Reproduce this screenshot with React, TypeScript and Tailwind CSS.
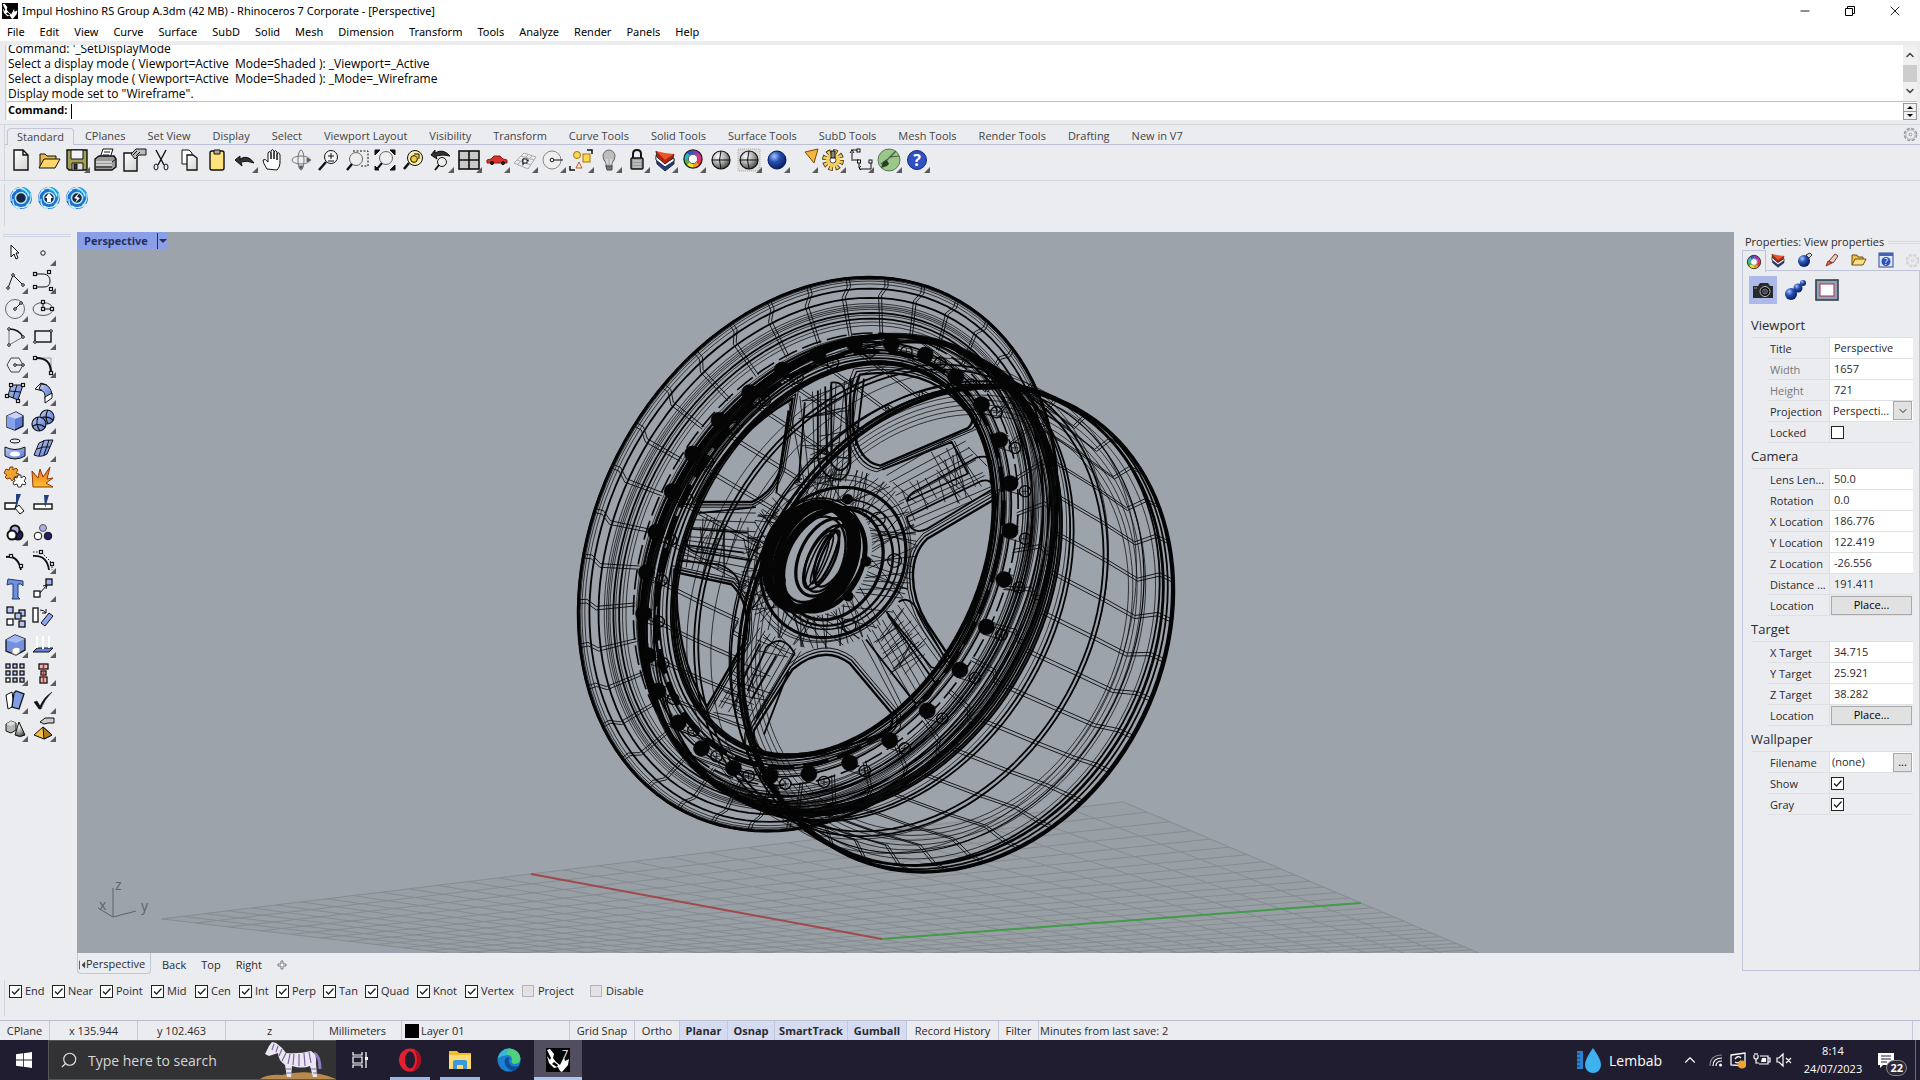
import type { ReactNode } from "react";
import { ChevronDown, ChevronUp, Minus, Search, X } from "lucide-react";

/* ---------- data ---------- */

const menus = ["File", "Edit", "View", "Curve", "Surface", "SubD", "Solid", "Mesh", "Dimension", "Transform", "Tools", "Analyze", "Render", "Panels", "Help"];

const toolTabs = ["CPlanes", "Set View", "Display", "Select", "Viewport Layout", "Visibility", "Transform", "Curve Tools", "Solid Tools", "Surface Tools", "SubD Tools", "Mesh Tools", "Render Tools", "Drafting", "New in V7"];

const osnaps = [
  { label: "End", width: "w-[43px]" },
  { label: "Near", width: "w-[48px]" },
  { label: "Point", width: "w-[51px]" },
  { label: "Mid", width: "w-[44px]" },
  { label: "Cen", width: "w-[44px]" },
  { label: "Int", width: "w-[37px]" },
  { label: "Perp", width: "w-[47px]" },
  { label: "Tan", width: "w-[42px]" },
  { label: "Quad", width: "w-[52px]" },
  { label: "Knot", width: "w-[48px]" },
  { label: "Vertex", width: "w-[57px]" },
];

const toggles = [
  { label: "Grid Snap", width: "w-[65px]", on: false },
  { label: "Ortho", width: "w-[45px]", on: false },
  { label: "Planar", width: "w-[48px]", on: true },
  { label: "Osnap", width: "w-[47px]", on: true },
  { label: "SmartTrack", width: "w-[73px]", on: true },
  { label: "Gumball", width: "w-[59px]", on: true },
  { label: "Record History", width: "w-[92px]", on: false },
  { label: "Filter", width: "w-[40px]", on: false },
];

/* ---------- wheel geometry ---------- */

type Ring = [cx: number, cy: number, w: number, h: number, k: number];

const FRONT: Ring = [632, 744, 588, 701, 125];
const LIP: Ring = [652, 757, 468, 568, 115];
const FACE: Ring = [654, 757, 452, 550, 115];
const DISC: Ring = [672, 757, 388, 493, 110];
const MID: Ring = [711, 795, 508, 605, 115];
const BACK: Ring = [976, 935, 528, 613, 86];

function mix(a: Ring, b: Ring, t: number): Ring {
  return a.map((v, i) => v + (b[i] - v) * t) as Ring;
}

function grow(r: Ring, f: number): Ring {
  return [r[0], r[1], r[2] * f, r[3] * f, r[4] * f];
}

function at([cx, cy, w, h, k]: Ring, a: number): [number, number] {
  return [cx + k * Math.sin(a) + Math.sqrt(w * w - k * k) * Math.cos(a), cy - h * Math.sin(a)];
}

function line(points: [number, number][]) {
  return "M" + points.map((p) => p[0].toFixed(1) + " " + p[1].toFixed(1)).join("L");
}

function loop(r: Ring) {
  return line(Array.from({ length: 120 }, (_, i) => at(r, (i / 120) * Math.PI * 2))) + "Z";
}

const fineRings = [
  ...[0.04, 0.07, 0.12, 0.46, 0.5, 0.53, 0.56, 0.66, 0.78, 0.84].map((s) => mix(FRONT, LIP, s)),
  ...[0.15, 0.3, 0.45, 0.6, 0.7, 0.8, 0.9].map((s) => mix(LIP, MID, s)),
  ...[0.1, 0.25, 0.4, 0.6].map((s) => mix(FACE, DISC, s)),
  ...[0.08, 0.44, 0.68].map((s) => mix(MID, BACK, s)),
  ...[0.86, 0.88, 0.9, 0.92, 0.94].map((f) => grow(mix(MID, BACK, 0.87), f)),
  grow(mix(MID, BACK, 0.9), 0.97),
].map(loop);

const boldRings = [
  ...[0, 0.018, 0.2, 0.36, 0.62, 0.72].map((s) => mix(FRONT, LIP, s)),
  ...[0.4, 0.65, 0.76, 0.86, 0.95, 1].map((s) => mix(LIP, MID, s)),
  ...[0, 0.35, 0.5, 0.72, 0.85, 1].map((s) => mix(FACE, DISC, s)),
  ...[0.02, 0.04, 0.11, 0.14].map((s) => mix(MID, BACK, s)),
  ...[0.96, 0.98].map((f) => grow(mix(MID, BACK, 0.47), f)),
  ...[0.88, 0.95, 0.985, 1].map((s) => mix(MID, BACK, s)),
].map(loop);

// each meridian is drawn twice, a hair apart, as the surface seams are
const meridians = Array.from({ length: 38 }, (_, i) => (i / 38) * Math.PI * 2).flatMap((a) =>
  [0, 0.014].flatMap((d) => [
    line([FRONT, mix(FRONT, LIP, 0.15), mix(FRONT, LIP, 0.32), mix(FRONT, LIP, 0.62), LIP].map((r, n) => at(r, a + d + (n > 1 ? 0.03 : 0)))),
    line([MID, grow(mix(MID, BACK, 0.47), 0.97), grow(mix(MID, BACK, 0.8), 0.94), mix(MID, BACK, 0.88), BACK].map((r, n) => at(r, a + d + (n > 2 ? 0.03 : 0)))),
  ]),
);

const bolts = [
  [1103, 685], [1103, 565], [1078, 455], [1033, 365], [970, 295], [895, 240], [812, 212], [722, 212], [632, 240],
  [545, 278], [465, 335], [390, 405], [325, 490], [275, 585], [235, 688], [212, 790], [205, 895], [216, 1000],
  [240, 1090], [290, 1170], [347, 1235], [425, 1285], [515, 1305], [610, 1300], [710, 1272], [808, 1215],
  [900, 1140], [980, 1037], [1045, 928], [1088, 808],
];

const openings = [
  { d: "M735 290Q715 330 718 420Q730 510 785 520L1000 425Q1025 400 990 375Q900 265 735 290Z", c: [850, 400] },
  { d: "M1065 605L900 705Q865 740 865 800Q865 860 900 920L955 1005Q1055 850 1065 605Z", c: [980, 800] },
  { d: "M475 1190L570 1035Q645 970 710 1020L812 1145Q822 1185 790 1197Q640 1260 510 1250Q470 1230 475 1190Z", c: [645, 1130] },
  { d: "M285 790L420 820Q470 870 455 960L360 1130Q280 1000 285 790Z", c: [370, 920] },
  { d: "M335 612L470 612Q520 590 540 530L570 350Q420 440 335 612Z", c: [460, 510] },
];

const pockets = [
  "M632 330L632 500Q640 555 690 555Q715 540 712 500L712 300",
  "M665 310Q700 305 700 350L710 510Q690 550 665 515Z",
  "M745 300L725 470M650 320L655 520M600 360L585 560M560 380L530 590",
  "M850 610Q855 590 880 580L1020 500Q1060 490 1058 520L1055 560",
  "M850 650L1030 560Q1060 550 1060 580L900 680Q860 700 850 650Z",
  "M790 530L960 460L1000 540L850 610",
  "M750 960L870 1120Q910 1120 920 1070L805 900",
  "M830 865Q850 850 870 875L945 1010Q940 1040 910 1030L800 890",
  "M460 1090L505 980Q545 940 575 995L480 1160",
  "M440 1080L490 970M530 1000L470 1110M560 1040L500 1200",
  "M320 680L460 690M300 720L450 740M290 760L390 770Q440 790 440 830",
  "M310 690Q300 740 350 740L470 760M340 640L480 625",
];

// spoke side rails: hub end then rim end
const spokes = [
  [[600, 570], [700, 560], [570, 350], [740, 290]],
  [[800, 545], [860, 680], [985, 440], [1062, 585]],
  [[840, 860], [740, 960], [945, 1015], [830, 1140]],
  [[590, 990], [490, 930], [480, 1180], [370, 1120]],
  [[480, 830], [480, 640], [290, 780], [330, 640]],
];

function rnd(n: number) {
  const x = Math.sin(n * 127.1) * 43758.5453;
  return x - Math.floor(x);
}

const spokeMesh = spokes.flatMap(([a, b, c, d], s) =>
  Array.from({ length: 26 }, (_, i) => {
    const pick = (u: number, v: number): [number, number] => [
      (a[0] * (1 - u) + b[0] * u) * (1 - v) + (c[0] * (1 - u) + d[0] * u) * v,
      (a[1] * (1 - u) + b[1] * u) * (1 - v) + (c[1] * (1 - u) + d[1] * u) * v,
    ];
    const n = s * 50 + i;
    if (i < 9) return line([pick(i / 8, 0), pick(i / 8 + (rnd(n) - 0.5) * 0.12, 1)]);
    const v = rnd(n);
    return line([pick(rnd(n + 7) * 0.4, v), pick(0.6 + rnd(n + 3) * 0.4, v + (rnd(n + 11) - 0.5) * 0.3)]);
  }),
);

const hubRings: { r: Ring; w: number }[] = [
  { r: [612, 750, 104, 132, 26], w: 13 },
  { r: [630, 752, 100, 132, 26], w: 8 },
  { r: [622, 757, 78, 108, 26], w: 3 },
  { r: [644, 760, 104, 128, 26], w: 6 },
  { r: [648, 752, 70, 98, 28], w: 4 },
  { r: [655, 755, 56, 84, 28], w: 3 },
  { r: [640, 758, 44, 74, 28], w: 3 },
  { r: [655, 750, 30, 66, 26], w: 3 },
  { r: [630, 762, 30, 66, 26], w: 2 },
  { r: [642, 757, 28, 62, 25], w: 2 },
  { r: [668, 748, 46, 78, 28], w: 3 },
  { r: [620, 742, 126, 140, 20], w: 2 },
  { r: [670, 770, 122, 140, 26], w: 4 },
  { r: [676, 775, 140, 150, 26], w: 3 },
  { r: [676, 770, 156, 164, 26], w: 2 },
  { r: [670, 765, 178, 190, 26], w: 4 },
  { r: [666, 760, 190, 204, 26], w: 1 },
  { r: [660, 755, 200, 212, 26], w: 1 },
];

const hubMesh = Array.from({ length: 110 }, (_, i) => {
  const a = (i / 110) * Math.PI * 2;
  const from: Ring = [645, 755, 120, 145, 26];
  const to: Ring = [660, 755, 215, 228, 26];
  return line([at(from, a), at(to, a + (rnd(i) - 0.5) * 0.9)]);
});

/* ---------- construction plane ---------- */

// maps plane units (-1..1) to the canvas
function plane(u: number, v: number): [number, number] {
  const w = 1 - 0.2597 * u - 0.1713 * v;
  return [(-488.9 * u + 245.9 * v + 882) / w, (-292 * u - 190.7 * v + 939) / w];
}

const gridLines = Array.from({ length: 29 }, (_, i) => i / 14 - 1).flatMap((t) => [
  line([plane(t, -1), plane(t, 1)]),
  line([plane(-1, t), plane(1, t)]),
]);

function Scene() {
  return (
    <svg viewBox="77 232 1657 721" preserveAspectRatio="xMidYMid slice" className="absolute inset-0 h-full w-full" aria-label="Wheel wireframe">
      <path d={line([plane(-1, -1), plane(-1, 1), plane(1, 1), plane(1, -1)]) + "Z"} fill="#969ca1" fillOpacity="0.55" />
      <path d={gridLines.join("")} fill="none" stroke="#868c92" strokeWidth="1" />
      <path d={line([plane(1, 0), plane(0, 0)])} stroke="#a04a4c" strokeWidth="2" />
      <path d={line([plane(0, 1), plane(0, 0)])} stroke="#459a4b" strokeWidth="2" />

      <g fill="none" stroke="#5d636a" strokeWidth="1">
        <path d="M113 888V917L136 911M113 917L98 908" />
      </g>
      <g fill="#5d636a" fontSize="14">
        <text x="115" y="890">z</text>
        <text x="99" y="910">x</text>
        <text x="141" y="911">y</text>
      </g>

      <g transform="translate(560 260) scale(.408 .3954)" fill="none" stroke="#050505" strokeLinejoin="round">
        <path d={fineRings.join("")} strokeWidth="1.8" />
        <path d={boldRings.join("")} strokeWidth="4.5" />
        <path d={meridians.join("")} strokeWidth="2.2" />
        <path d={loop(FRONT)} strokeWidth="6" />
        <path d={loop(BACK)} strokeWidth="8" />
        <path d={loop(mix(LIP, MID, 0.9))} strokeWidth="12" strokeOpacity="0.85" />
        <path d={loop(mix(MID, BACK, 0.03))} strokeWidth="9" strokeOpacity="0.7" />
        <path d={loop(mix(FACE, DISC, 0.42))} strokeWidth="12" strokeDasharray="64 22" />
        <path d={loop(mix(FRONT, LIP, 0.97))} strokeWidth="4" strokeDasharray="50 14" />
        <path d={loop(mix(FACE, DISC, 0.92))} strokeWidth="8" />
        {/* barrel seen through the openings */}
        <path d={loop(grow(mix(MID, BACK, 0.93), 0.99))} strokeWidth="7" />
        <path d={loop(grow(mix(MID, BACK, 0.8), 0.97))} strokeWidth="3" />
        <path d={spokeMesh.join("")} strokeWidth="2" />
        <path d={hubMesh.join("")} strokeWidth="2" />
        <path d={pockets.join("")} strokeWidth="4.5" />
        {openings.map(({ d, c }) => (
          <g key={d}>
            <path d={d} strokeWidth="6" />
            <path d={d} strokeWidth="3" transform={`translate(${c[0]} ${c[1]}) scale(1.07) translate(${-c[0]} ${-c[1]})`} />
            <path d={d} strokeWidth="2" transform={`translate(${c[0]} ${c[1]}) scale(1.13) translate(${-c[0]} ${-c[1]})`} />
          </g>
        ))}
        {hubRings.map(({ r, w }) => (
          <path key={loop(r)} d={loop(r)} strokeWidth={w * 2} />
        ))}
        {[[705, 605], [750, 762], [706, 850], [540, 810], [630, 620], [600, 880]].map(([x, y]) => (
          <circle key={x} cx={x} cy={y} r="13" fill="#050505" />
        ))}
        {[[780, 655], [708, 925], [820, 760]].map(([x, y]) => (
          <circle key={x} cx={x} cy={y} r="17" strokeWidth="3" />
        ))}
        {bolts.map(([x, y]) => (
          <g key={`${x}-${y}`}>
            <circle cx={x} cy={y} r="20" fill="#050505" />
            <circle cx={x + 37} cy={y + 20} r="14" strokeWidth="3.5" />
            <path d={`M${x + 28} ${y + 20}h18m-9-9v18M${x - 8} ${y - 18}l30 8M${x - 8} ${y + 18}l38 12`} strokeWidth="2" />
          </g>
        ))}
      </g>
    </svg>
  );
}

/* ---------- icons ---------- */

function Tool({ children, label, flyout }: { children: ReactNode; label: string; flyout?: boolean }) {
  return (
    <button type="button" aria-label={label} className="h-7 w-7 shrink-0">
      <svg viewBox="0 0 28 28" className="h-7 w-7" fill="none" stroke="#111" strokeWidth="1">
        {children}
        {flyout && <path d="M21 27L27 21V27Z" fill="#5b5b5b" stroke="none" />}
      </svg>
    </button>
  );
}

function Gradients() {
  return (
    <svg className="absolute h-0 w-0" aria-hidden="true">
      <defs>
        <radialGradient id="gray" cx=".35" cy=".3" r=".8">
          <stop offset="0" stopColor="#fff" />
          <stop offset=".5" stopColor="#a9a9a9" />
          <stop offset="1" stopColor="#333" />
        </radialGradient>
        <radialGradient id="blue" cx=".35" cy=".3" r=".8">
          <stop offset="0" stopColor="#a9c4ff" />
          <stop offset=".4" stopColor="#2450b4" />
          <stop offset="1" stopColor="#04124a" />
        </radialGradient>
        <linearGradient id="steel" x1="0" y1="0" x2="1" y2="1">
          <stop offset="0" stopColor="#bccbf8" />
          <stop offset="1" stopColor="#5476cf" />
        </linearGradient>
        <linearGradient id="paper" x1="0" y1="0" x2="1" y2="1">
          <stop offset="0" stopColor="#fff" />
          <stop offset="1" stopColor="#d2d2d2" />
        </linearGradient>
        <linearGradient id="fire" x1="0" y1="0" x2="0" y2="1">
          <stop offset="0" stopColor="#f06a1c" />
          <stop offset="1" stopColor="#fcc02e" />
        </linearGradient>
      </defs>
    </svg>
  );
}

const wheelColors = ["#e43b2f", "#f29a22", "#f2e526", "#48b649", "#28b7c9", "#3553c8", "#8a3cb8", "#dd2f8c"];

function ColorWheel({ cx, cy, r }: { cx: number; cy: number; r: number }) {
  return (
    <g strokeWidth={r * 0.6}>
      {wheelColors.map((c, i) => (
        <circle key={c} cx={cx} cy={cy} r={r} stroke={c} pathLength={8} strokeDasharray="1.05 6.95" strokeDashoffset={-i} />
      ))}
      <circle cx={cx} cy={cy} r={r * 1.3} stroke="#222" strokeWidth="1.3" />
      <circle cx={cx} cy={cy} r={r * 0.66} fill="#fff" stroke="#333" strokeWidth=".8" />
    </g>
  );
}

const layersShape = (
  <g strokeWidth=".8">
    <path d="M5 11L14 18L23 13V18L14 25L6 18Z" fill="#1f3f8f" />
    <path d="M5 9L14 17L23 12V15L14 21L5 14Z" fill="#fff" />
    <path d="M5 5L14 14L23 8L22 12L14 18L6 11Z" fill="#b52410" />
    <path d="M5 5L14 7L23 8L14 14Z" fill="#f0522a" stroke="none" />
  </g>
);

const standardTools: { label: string; flyout?: boolean; art: ReactNode }[] = [
  { label: "New", art: <path d="M7 4H16L21 9V24H7ZM16 4V9H21" fill="url(#paper)" strokeWidth="1.4" /> },
  { label: "Open", art: <><path d="M5 21V8H10L12 10H21V13" fill="#e9b840" /><path d="M4 22L9 13H25L20 22Z" fill="#ffd76a" /></> },
  { label: "Save", flyout: true, art: <><path d="M4 4H24V24H6L4 22Z" fill="#a3a056" strokeWidth="1.4" /><path d="M8 4H20V13H8Z" fill="#f4f4f4" /><path d="M9 17H20V24H9Z" fill="#ddd" /><path d="M11 18H14V23H11Z" fill="#333" /></> },
  { label: "Print", art: <><path d="M9 12L12 3H22L19 12Z" fill="#fff" /><path d="M4 13L8 10H23L25 13V21L21 24H4Z" fill="#999" strokeWidth="1.4" /><path d="M5 16H21M5 19H21" stroke="#fff" /><path d="M13 6H19M12 9H18M5 21H21M21 16L25 13" /></> },
  { label: "Document properties", art: <><path d="M5 7H18V25H5Z" fill="url(#paper)" strokeWidth="1.4" /><path d="M12 8L17 3H27V9H20L16 13Z" fill="#bbb" /><path d="M14 9L18 5M17 10L21 6" /></> },
  { label: "Cut", art: <><path d="M9 4L17 19M19 4L11 19" strokeWidth="1.4" /><ellipse cx="9" cy="21" rx="2" ry="3" /><ellipse cx="19" cy="21" rx="2" ry="3" /></> },
  { label: "Copy", art: <><path d="M7 4H14L17 7V18H7Z" fill="#fff" /><path d="M12 9H18L22 12V24H12Z" fill="url(#paper)" strokeWidth="1.3" /></> },
  { label: "Paste", art: <><rect x="7" y="5" width="14" height="19" rx="2" fill="#ffe37c" strokeWidth="1.4" /><path d="M11 4H17V8H11Z" fill="#aaa" /></> },
  { label: "Undo", flyout: true, art: <path d="M4 14L9 10V13Q17 8 23 17Q16 14 10 16L11 20Z" fill="#333" /> },
  { label: "Pan", art: <path d="M8 23Q4 17 4 14Q6 12 9 16V7Q10 4 12 7V13V5Q13 2 15 5V13V6Q16 3 18 6V14V8Q20 5 21 9V17Q21 21 18 24Z" fill="#fff" /> },
  { label: "Rotate view", art: <g stroke="#777"><ellipse cx="14" cy="14" rx="9" ry="4" /><ellipse cx="14" cy="14" rx="3" ry="10" /><path d="M24 14L20 12V16ZM14 24L12 20H16Z" fill="#444" /></g> },
  { label: "Zoom dynamic", art: <><circle cx="16" cy="11" r="6.5" fill="#f5f5f5" /><path d="M11 16L4 24" strokeWidth="2.4" /><path d="M13 10H19M16 7V13M13 15H19" /></> },
  { label: "Zoom window", art: <><path d="M10 5H25V20H18" strokeDasharray="2 1.5" /><circle cx="13" cy="13" r="6.5" fill="#eee" stroke="#666" /><path d="M9 18L4 24" strokeWidth="2.4" /></> },
  { label: "Zoom extents", art: <><path d="M4 4H9L4 9ZM24 4V9L19 4ZM24 24H19L24 19ZM4 24V20L8 24Z" fill="#111" /><circle cx="15" cy="12" r="6.5" fill="#eee" stroke="#666" /><path d="M11 17L6 23" strokeWidth="2" /></> },
  { label: "Zoom selected", art: <><circle cx="16" cy="12" r="7.5" fill="#f6efb0" /><path d="M10 17L5 23" strokeWidth="2.6" /><circle cx="15" cy="13" r="3.4" fill="#f2cc3a" /><path d="M15 8H20V13" fill="#f2cc3a" /></> },
  { label: "Undo view", flyout: true, art: <><path d="M4 9L8 4V7Q16 2 23 10Q16 8 9 10L10 13Z" fill="#333" /><circle cx="15" cy="16" r="4.5" fill="#eee" /><path d="M12 19L8 24" strokeWidth="2" /></> },
  { label: "Viewports", flyout: true, art: <><rect x="4" y="5" width="20" height="18" fill="#c9c9c9" strokeWidth="1.6" /><path d="M14 5V23M4 14H24" strokeWidth="1.6" /></> },
  { label: "Set view", flyout: true, art: <><path d="M4 14L8 13L11 10H17L20 13L24 14V17H4Z" fill="#d6342b" stroke="#8c1812" /><circle cx="9" cy="17" r="1.600" fill="#222" /><circle cx="20" cy="17" r="1.600" fill="#222" /></> },
  { label: "Set CPlane", flyout: true, art: <g stroke="#aaa"><path d="M3 17L13 7L25 11L17 23ZM7 18L17 9M11 20L21 10M6 14L20 19M10 10L23 14" /><path d="M12 19V13L18 15" stroke="#111" /><rect x="12" y="13" width="4" height="4" fill="#fff" stroke="#111" /></g> },
  { label: "Object snap", flyout: true, art: <><circle cx="13" cy="14" r="9" stroke="#888" fill="#efefef" /><path d="M13 14H24" /><circle cx="13" cy="14" r="1.800" fill="#fff" /></> },
  { label: "Select", flyout: true, art: <><circle cx="10" cy="9" r="3.500" fill="#ffd84d" stroke="#a5720c" /><rect x="16" y="8" width="7" height="8" fill="#ffd84d" stroke="#a5720c" /><path d="M12 16L15 22H9Z" fill="#fbe9c4" stroke="#b0622d" /><path d="M20 4H25V8M3 20V24H8" strokeWidth="1.500" /></> },
  { label: "Hide", flyout: true, art: <><path d="M14 4A6 6 0 0 1 20 10Q20 14 17 17V21H11V17Q8 14 8 10A6 6 0 0 1 14 4Z" fill="#bdbdbd" stroke="#666" /><path d="M11 20H17V24H12Z" fill="#777" stroke="#444" /><path d="M12 13V18M16 13V18" stroke="#eee" /></> },
  { label: "Lock", flyout: true, art: <><path d="M10 13V8Q10 4 14 4T18 8V13" strokeWidth="2" /><rect x="8" y="12" width="12" height="11" rx="1" fill="#999" strokeWidth="1.400" /><path d="M10 15H18M10 18H18M10 21H18" stroke="#ddd" /></> },
  { label: "Edit layers", flyout: true, art: layersShape },
  { label: "Object properties", flyout: true, art: <ColorWheel cx={14} cy={13} r={7} /> },
  { label: "Shade", art: <><circle cx="14" cy="14" r="9" fill="url(#gray)" strokeWidth="1.200" /><path d="M5 14H23M14 5Q11 14 14 23" /></> },
  { label: "Ghosted", flyout: true, art: <><rect x="3" y="3" width="22" height="22" stroke="#aaa" strokeDasharray="1 1" fill="#dcdcdc" /><circle cx="14" cy="14" r="9" fill="url(#gray)" strokeWidth="1.200" /><path d="M5 14H23M14 5Q11 14 14 23" /></> },
  { label: "Render", flyout: true, art: <><circle cx="14" cy="14" r="9" fill="url(#blue)" stroke="#04155c" /></> },
  { label: "Spotlight", flyout: true, art: <path d="M14 6L27 3L23 17Z" fill="#f4b63c" stroke="#7a4a0a" /> },
  { label: "Options", flyout: true, art: <><circle cx="14" cy="14" r="8" stroke="#5b4514" strokeWidth="6" strokeDasharray="4 2.280" /><circle cx="14" cy="14" r="8" stroke="#f4cf5c" strokeWidth="4" strokeDasharray="2.400 3.880" strokeDashoffset="-.8" /><circle cx="14" cy="14" r="6.500" fill="#f4cf5c" stroke="#f4cf5c" /><circle cx="14" cy="14" r="3" fill="#fff" stroke="#555" /><path d="M12 5H16V12H12Z" fill="#888" /></> },
  { label: "Dimensions", flyout: true, art: <><path d="M4 4H11M5 6V13M4 14H12V22M12 23H24M24 15V23M3 7L5 4L7 7M14 20L12 22L14 24" /><rect x="10" y="3" width="3" height="3" fill="#fff" /><rect x="10.500" y="14" width="3" height="3" fill="#fff" /><rect x="22" y="14" width="3" height="3" fill="#fff" /></> },
  { label: "Grasshopper", flyout: true, art: <><circle cx="14" cy="14" r="11" fill="#9cc78a" stroke="#5c7753" /><path d="M6 18L13 13L21 5M15 11L24 10" stroke="#42593c" strokeWidth="1.200" /><path d="M6 22L8 16L12 14L14 18L12 20Z" fill="#2c3d28" stroke="none" /></> },
  { label: "Help", flyout: true, art: <><circle cx="14" cy="14" r="9.500" fill="#2f52c0" stroke="#14297a" /><text x="14" y="20" textAnchor="middle" fontSize="16" fontWeight="700" fill="#fff" stroke="none">?</text></> },
];

const dot = (x: number, y: number) => <rect x={x - 1.5} y={y - 1.5} width="3" height="3" fill="#fff" strokeWidth="1.200" />;
const ball = (x: number, y: number) => <circle cx={x} cy={y} r="1.300" fill="#fff" />;

const sideTools: { label: string; flyout?: boolean; art: ReactNode }[] = [
  { label: "Select", art: <path d="M10 6L10 18L13 15L15 20L17 19L15 14L18 14Z" fill="#fff" /> },
  { label: "Point", flyout: true, art: <circle cx="14" cy="14" r="2.200" fill="#fff" /> },
  { label: "Polyline", flyout: true, art: <><path d="M7 21L12 8L22 18" />{ball(7, 21)}{ball(12, 8)}{ball(22, 18)}</> },
  { label: "Curve", flyout: true, art: <><path d="M6 7H15Q21 8 21 14Q21 20 15 20H6" />{dot(6, 7)}{dot(20, 5)}{dot(6, 20)}{dot(22, 22)}</> },
  { label: "Circle", flyout: true, art: <><circle cx="14" cy="14" r="9.500" stroke="#666" /><path d="M14 14L20 8" />{ball(14, 14)}{ball(20, 8)}</> },
  { label: "Ellipse", flyout: true, art: <><ellipse cx="14" cy="14" rx="10" ry="6.500" stroke="#555" /><path d="M14 7V14H23" />{dot(14, 7)}{dot(14, 14)}{dot(23, 14)}</> },
  { label: "Arc", flyout: true, art: <><path d="M8 6V22L22 14" stroke="#777" /><path d="M8 6Q18 6 22 14" strokeWidth="1.400" />{ball(8, 6)}{ball(8, 22)}{ball(22, 14)}</> },
  { label: "Rectangle", flyout: true, art: <><rect x="6" y="8" width="16" height="11" strokeWidth="1.400" />{ball(22, 8)}{ball(6, 19)}</> },
  { label: "Polygon", flyout: true, art: <><path d="M6 14L10 7H18L22 14L18 21H10Z" stroke="#444" /><path d="M14 14H22" />{ball(14, 14)}{ball(22, 14)}</> },
  { label: "Fillet", flyout: true, art: <><path d="M6 7H22V22" stroke="#999" /><path d="M6 7Q22 6 22 22" strokeWidth="2" />{dot(6, 7)}{dot(22, 22)}</> },
  { label: "Surface from points", flyout: true, art: <><path d="M10 6H22L17 21L7 17Z" fill="url(#steel)" /><path d="M9 12L19 13M16 6L12 19" />{dot(10, 6)}{dot(22, 6)}{dot(6, 17)}{dot(17, 22)}</> },
  { label: "Surface corner", flyout: true, art: <><path d="M6 10L12 4L18 6L14 12Z" fill="#fff" /><path d="M12 5Q22 5 23 16L16 20Q17 12 10 10Z" fill="url(#steel)" /><path d="M16 18L23 14V19L16 24Z" fill="#fff" /></> },
  { label: "Box", flyout: true, art: <><path d="M6 9L15 5L22 9V19L14 23L6 20Z" fill="#5b7bd0" strokeWidth="1.300" /><path d="M6 9L15 5L22 9L14 12Z" fill="#c6d3fb" stroke="none" /><path d="M6 9L14 12V23L6 20Z" fill="#86a2ea" stroke="none" /></> },
  { label: "Boolean", flyout: true, art: <g strokeWidth="1.200"><circle cx="18" cy="10" r="7" fill="url(#steel)" /><circle cx="10" cy="17" r="7" fill="url(#steel)" /><path d="M4 19Q10 16 16 20M9 10Q6 17 11 24M19 3Q15 9 19 17M12 11Q18 8 24 13" /></g> },
  { label: "Cylinder", flyout: true, art: <><ellipse cx="14" cy="6" rx="5" ry="2" /><path d="M4 12Q14 17 24 12V21Q14 27 4 21Z" fill="url(#steel)" /><ellipse cx="14" cy="19" rx="5" ry="2.500" fill="#fff" stroke="none" /></> },
  { label: "Surface edit", flyout: true, art: <><path d="M10 8Q16 4 24 5L18 19Q12 23 5 20Z" fill="url(#steel)" /><path d="M8 14Q14 11 21 12M15 5L10 21M20 5L15 20" /></> },
  { label: "Join", art: <><path d="M5 6L8 7L9 4H12L12 7L15 5L17 7L15 10L18 11V14L15 13L13 16L11 18L9 15L6 16L4 14L6 12L3 10Z" fill="#f2a233" stroke="#7a4306" /><path d="M13 14L16 15L17 12H20L20 15L23 13L25 15L23 18L25 20L24 22L21 21L20 24H17L16 21L13 22L12 19L14 18Z" fill="#fff" stroke="#333" /></> },
  { label: "Explode", art: <path d="M4 24L3 8L9 15L11 6L14 14L21 4L18 16L24 15L17 20L24 24Z" fill="url(#fire)" stroke="#8a3a08" /> },
  { label: "Trim", art: <><path d="M4 12H16L14 18H4Z" fill="#fff" strokeWidth="1.400" /><path d="M15 3H20L15 16Z" fill="#24407c" stroke="none" /><path d="M14 17L18 14L23 20L19 23Z" fill="#fff" /></> },
  { label: "Split", art: <><rect x="5" y="13" width="18" height="5" fill="#fff" strokeWidth="1.400" /><path d="M15 4H20L16 17Z" fill="#24407c" stroke="none" /></> },
  { label: "Group", flyout: true, art: <g strokeWidth="2"><circle cx="17" cy="16" r="4.500" fill="#231f66" /><circle cx="14" cy="11" r="4.500" fill="#a9aee8" /><circle cx="11" cy="16" r="4.500" fill="#fff" /></g> },
  { label: "Ungroup", art: <><circle cx="14" cy="9" r="3.500" fill="#a9aee8" stroke="#555" /><circle cx="9" cy="17" r="3.800" fill="#fff" /><circle cx="19" cy="17" r="3.800" fill="#231f66" /></> },
  { label: "Edit points", art: <><path d="M5 10Q17 8 20 23" strokeWidth="1.800" />{dot(10, 9)}{dot(20, 19)}</> },
  { label: "Control points", flyout: true, art: <><path d="M4 9Q18 8 20 23" strokeWidth="1.800" /><path d="M4 5H12L23 16V23" strokeDasharray="1.500 1.500" />{dot(12, 5)}{dot(23, 17)}</> },
  { label: "Text", art: <path d="M7 4L22 6V11L20 9H17V22L19 24H11L12 22V9H9L6 10Z" fill="#6f90dd" stroke="#223a7a" /> },
  { label: "Move", flyout: true, art: <><path d="M10 19L18 10M14 11L18 10L17 14" /><rect x="5" y="16" width="6" height="6" fill="#fff" strokeWidth="1.300" /><rect x="17" y="4" width="6" height="6" fill="#9db2f2" strokeWidth="1.300" /></> },
  { label: "Copy objects", art: <g strokeWidth="1.300"><rect x="6" y="4" width="6" height="6" fill="#b4c3f7" /><rect x="18" y="7" width="6" height="6" fill="#b4c3f7" /><rect x="14" y="10" width="6" height="6" fill="#b4c3f7" /><rect x="6" y="16" width="6" height="6" fill="#fff" /><rect x="18" y="18" width="6" height="6" fill="#b4c3f7" /></g> },
  { label: "Rotate", art: <><rect x="4" y="5" width="5" height="14" fill="#fff" strokeWidth="1.300" /><path d="M12 20L20 10L24 13L16 23Z" fill="#8ea8ec" /><path d="M11 7Q15 7 17 10M17 6V10H13" /></> },
  { label: "Solid tools", flyout: true, art: <><path d="M5 9L14 4L24 8V19L15 24L5 20Z" fill="#7391e0" strokeWidth="1.300" /><path d="M5 9L14 4L24 8L15 12Z" fill="#a5b9f4" stroke="none" /><path d="M11 18L15 16L19 17V21L15 24L11 22Z" fill="#fff" stroke="#888" /></> },
  { label: "Extrude", flyout: true, art: <><path d="M4 21L8 17H24L20 21Z" fill="#5e80d8" /><path d="M8 17V5M14 18V5M20 17V5" stroke="#fff" strokeWidth="2" /></> },
  { label: "Array", flyout: true, art: <g strokeWidth="1.300">{[5, 12, 19].flatMap((x) => [5, 12, 19].map((y) => <rect key={`${x}${y}`} x={x} y={y} width="4" height="4" fill={x === 5 && y === 19 ? "#fff" : "#b4c3f7"} />))}</g> },
  { label: "Align", flyout: true, art: <g strokeWidth="1.300"><rect x="10" y="5" width="9" height="5" fill="#f0b8b8" /><rect x="12" y="12" width="5" height="4" fill="#f0b8b8" /><rect x="11" y="18" width="7" height="6" fill="#f0b8b8" /><path d="M14.500 4V25" stroke="#b82828" strokeWidth="1.600" /></g> },
  { label: "Transform", flyout: true, art: <><path d="M5 8L11 5L13 19L7 22Z" fill="#fff" /><path d="M13 6L15 4L23 7L18 22L11 20Z" fill="#7f9ce4" strokeWidth="1.300" /></> },
  { label: "Check", flyout: true, art: <path d="M5 15L8 14L11 19Q15 10 23 5Q15 13 12 22H10Z" fill="#111" strokeWidth=".5" /> },
  { label: "Mesh", flyout: true, art: <><path d="M5 9L10 6L15 8V15L10 18L5 16Z" fill="#b5b5b5" /><path d="M5 9L10 6L15 8L10 11Z" fill="#ddd" stroke="none" /><path d="M18 7L24 20Q19 23 14 20Z" fill="url(#gray)" /></> },
  { label: "Cage edit", flyout: true, art: <><path d="M14 12L23 20L15 24L5 20Z" fill="#f2bd49" /><path d="M14 12L15 24L23 20Z" fill="#b77c1b" /><path d="M11 7L16 3H25V8H19L15 9Z" fill="#ccc" /></> },
];

function RhinoLogo({ className, seven }: { className: string; seven?: boolean }) {
  return (
    <svg viewBox="0 0 24 24" className={className} aria-label="Rhinoceros">
      <rect width="24" height="24" fill="#050505" />
      <path d="M1 2L4 1L8 6L7 10L10 14L14 17L18 9L19 13L23 11L22 17L16 24L14 23L12 19L8 20L3 15L1 8L4 12L5 10Z" fill="#fff" />
      <path d="M8 14L12 17L11 19L6 16Z" fill="#050505" />
      {seven && <text x="16" y="10" fontSize="11" fill="#fff">7</text>}
    </svg>
  );
}

function Shutter({ children, label }: { children?: ReactNode; label: string }) {
  return (
    <button type="button" aria-label={label} className="h-7 w-7">
      <svg viewBox="0 0 28 28" className="h-7 w-7" fill="none">
        <circle cx="14" cy="14" r="11" fill="#1d6fd0" />
        <path d="M14 3A11 11 0 0 1 25 12L21 14A7 7 0 0 0 14 7Z" fill="#27a6e0" />
        <path d="M12 3Q20 5 22 12M24 9Q25 17 19 22M23 20Q16 26 9 22M13 25Q5 23 6 15M4 17Q3 9 9 6M6 7Q12 2 18 6" stroke="#c7f1fa" strokeWidth="1.200" />
        <circle cx="14" cy="14" r="5.500" fill="#17273d" stroke="#b5e3f5" strokeWidth="1.500" />
        {children}
      </svg>
    </button>
  );
}

function GearIcon({ className }: { className: string }) {
  return (
    <svg viewBox="0 0 16 16" className={className} fill="none" stroke="currentColor">
      <circle cx="8" cy="8" r="6.500" strokeDasharray="3.500 1.600" strokeWidth="1.600" />
      <circle cx="8" cy="8" r="5" strokeWidth=".8" />
      <circle cx="8" cy="8" r="1.500" />
    </svg>
  );
}

/* ---------- small controls ---------- */

function Check({ id, checked, muted }: { id: string; checked?: boolean; muted?: boolean }) {
  return (
    <span className="relative block h-[13px] w-[13px] shrink-0">
      <input
        id={id}
        type="checkbox"
        defaultChecked={checked}
        className={muted ? "peer block h-3 w-3 appearance-none border border-[#b5b5b8] bg-[#e2e2e4]" : "peer block h-[13px] w-[13px] appearance-none border border-[#222] bg-white"}
      />
      <svg viewBox="0 0 13 13" className="pointer-events-none absolute inset-0 hidden h-[13px] w-[13px] peer-checked:block" fill="none" stroke="#222" strokeWidth="1.300">
        <path d="M3 6.500L5.500 9L10.500 3.500" />
      </svg>
    </span>
  );
}

function Row({ id, label, dim, plain, children }: { id: string; label: string; dim?: boolean; plain?: boolean; children: ReactNode }) {
  return (
    <div className="ml-[17px] flex h-[21px] border-b border-[#dfe0e4]">
      <label htmlFor={id} className={dim ? "w-[61px] shrink-0 whitespace-nowrap pl-[2px] leading-[21px] text-[#777]" : "w-[61px] shrink-0 whitespace-nowrap pl-[2px] leading-[21px]"}>
        {label}
      </label>
      <div className={plain ? "flex min-w-0 flex-1 items-center border-l border-[#dfe0e4]" : "flex min-w-0 flex-1 items-center border-l border-[#dfe0e4] bg-white"}>{children}</div>
    </div>
  );
}

function TextRow({ id, label, value, dim, plain }: { id: string; label: string; value: string; dim?: boolean; plain?: boolean }) {
  return (
    <Row id={id} label={label} dim={dim} plain={plain}>
      <input id={id} defaultValue={value} className="w-full bg-transparent pl-1 outline-none" />
    </Row>
  );
}

function PlaceRow({ id }: { id: string }) {
  return (
    <Row id={id} label="Location" plain>
      <button id={id} type="button" className="mx-px h-[19px] flex-1 border border-[#a9a9ac] bg-[#e1e1e1] leading-4 text-black">
        Place...
      </button>
    </Row>
  );
}

function Section({ title, children }: { title: string; children: ReactNode }) {
  return (
    <section>
      <h2 className="h-[26px] border-b border-[#dfe0e4] text-[13px] leading-[26px]">{title}</h2>
      {children}
    </section>
  );
}

/* ---------- page parts ---------- */

function TitleBar() {
  return (
    <header className="bg-white font-['Noto_Sans',sans-serif] text-black">
      <div className="flex h-[22px] items-center">
        <RhinoLogo className="ml-[2px] h-4 w-4" />
        <h1 className="ml-1 whitespace-nowrap">Impul Hoshino RS Group A.3dm (42 MB) - Rhinoceros 7 Corporate - [Perspective]</h1>
        <div className="ml-auto flex">
          <button type="button" aria-label="Minimize" className="flex h-5 w-[45px] items-center justify-center"><Minus className="h-3.5 w-3.5" strokeWidth={1.5} /></button>
          <button type="button" aria-label="Restore" className="flex h-5 w-[45px] items-center justify-center">
            <svg viewBox="0 0 12 12" className="h-3 w-3" fill="none" stroke="#000"><path d="M1.500 3.500H8.500V10.500H1.500ZM3.500 3.500V1.500H10.500V8.500H8.500" /></svg>
          </button>
          <button type="button" aria-label="Close" className="mr-[3px] flex h-5 w-[45px] items-center justify-center"><X className="h-4 w-4" strokeWidth={1.3} /></button>
        </div>
      </div>
      <nav className="flex h-[19px] items-end gap-[15px] pl-[7px]">
        {menus.map((m) => (
          <button key={m} type="button" className="leading-[18px]">{m}</button>
        ))}
      </nav>
    </header>
  );
}

function CommandArea() {
  return (
    <section className="border-t-4 border-[#ececee] pl-[5px] pr-[3px]">
      <div className="border-l border-[#c9ccdc] pl-px">
        <div className="flex h-14 bg-white text-black">
          <div className="flex flex-1 flex-col justify-end overflow-hidden whitespace-pre pl-px text-[12px] leading-[15px]">
            <p>Command: '_SetDisplayMode</p>
            <p>Select a display mode ( Viewport=Active  Mode=Shaded ): _Viewport=_Active</p>
            <p>Select a display mode ( Viewport=Active  Mode=Shaded ): _Mode=_Wireframe</p>
            <p>Display mode set to "Wireframe".</p>
          </div>
          <div className="flex w-[14px] flex-col items-center justify-between bg-[#f0f0f0] text-[#444]">
            <ChevronUp className="mt-1 h-3 w-3" strokeWidth={3} />
            <span className="h-[17px] w-full bg-[#cdcdcd]" />
            <ChevronDown className="mb-1 h-3 w-3" strokeWidth={3} />
          </div>
        </div>
        <div className="flex h-[19px] items-center border-t border-[#bfc1c9] bg-white text-black">
          <label htmlFor="command" className="pb-[2px] pl-px font-bold leading-4">Command:</label>
          <span className="ml-1 h-[15px] w-px bg-black" />
          <input id="command" className="h-4 flex-1 outline-none" />
          <div className="flex h-[17px] w-[14px] flex-col divide-y divide-[#999] border border-[#999] bg-[#f0f0f0]">
            <button type="button" aria-label="Previous" className="flex flex-1 items-center justify-center"><svg viewBox="0 0 6 3" className="h-[3px] w-[6px]"><path d="M0 3L3 0L6 3Z" /></svg></button>
            <button type="button" aria-label="Next" className="flex flex-1 items-center justify-center"><svg viewBox="0 0 6 3" className="h-[3px] w-[6px]"><path d="M0 0L3 3L6 0Z" /></svg></button>
          </div>
        </div>
      </div>
    </section>
  );
}

function Toolbars() {
  return (
    <section className="pt-1">
      <div className="border-y border-[#d3d5de] pl-[4px]">
        <div className="border-l border-[#d3d5de]">
          <div className="flex h-5 items-end gap-[22px] border-b border-[#bcc0d4] pr-[2px] text-[#444]">
            <button type="button" className="-mb-px -mr-[11px] ml-[2px] h-[17px] rounded-t-[4px] border border-b-0 border-[#c3c6d8] bg-[#ebecf0] px-[9px] leading-4">Standard</button>
            {toolTabs.map((t) => (
              <button key={t} type="button" className="h-[17px] leading-[17px]">{t}</button>
            ))}
            <button type="button" aria-label="Toolbar options" className="mb-0.5 ml-auto text-[#999]"><GearIcon className="h-[15px] w-[15px]" /></button>
          </div>
          <div className="flex h-[35px] pl-[2px] pt-px">
            {standardTools.map((t) => (
              <Tool key={t.label} label={t.label} flyout={t.flyout}>{t.art}</Tool>
            ))}
          </div>
        </div>
      </div>
      <div className="h-[51px] pl-[4px] pt-[3px]">
        <div className="flex h-[42px] border-l border-[#d3d5de] pl-[2px]">
          <Shutter label="Capture" />
          <Shutter label="Upload"><path d="M14 9L18 14H16V18H12V14H10Z" fill="#fff" /></Shutter>
          <Shutter label="Assist"><path d="M17 8L11 14L14 15L12 19L17 14L14 13Z" fill="#fff" /></Shutter>
        </div>
      </div>
    </section>
  );
}

function SideToolbar() {
  return (
    <aside className="w-[77px] shrink-0 pl-px">
      <div className="mb-[2px] ml-[2px] mr-[6px] mt-[2px] h-[3px] border-y border-[#cfd5e4]" />
      <div className="grid w-14 grid-cols-2">
        {sideTools.map((t) => (
          <Tool key={t.label} label={t.label} flyout={t.flyout}>{t.art}</Tool>
        ))}
      </div>
    </aside>
  );
}

function Viewport() {
  return (
    <main className="flex min-w-0 flex-1 flex-col">
      <div className="relative min-h-[600px] flex-1 overflow-hidden bg-[#9ca3ab]">
        <Scene />
        <div className="absolute left-0 top-0 flex h-[18px] items-center bg-[#8b9fe9] text-[#252f5c]">
          <span className="w-20 pl-[7px] font-bold">Perspective</span>
          <button type="button" aria-label="Viewport menu" className="flex h-4 w-[11px] items-center justify-center border-l border-[#252f5c]">
            <svg viewBox="0 0 8 4" className="h-1 w-2"><path d="M0 0H8L4 4Z" fill="#252f5c" /></svg>
          </button>
        </div>
      </div>
      <div className="flex h-[21px] items-end gap-[15px]">
        <button type="button" className="-mr-1 flex h-[21px] w-[74px] items-center rounded-b-[4px] border border-t-0 border-[#c3c6d8] pl-px pt-[3px]">
          <svg viewBox="0 0 8 10" className="h-[10px] w-[7px] shrink-0"><path d="M.5 0V10" stroke="#444" /><path d="M3 5L7 1V9Z" fill="#444" /></svg>
          Perspective
        </button>
        <button type="button" className="leading-[18px]">Back</button>
        <button type="button" className="leading-[18px]">Top</button>
        <button type="button" className="leading-[18px]">Right</button>
        <button type="button" aria-label="Add viewport" className="mb-1">
          <svg viewBox="0 0 10 10" className="h-[10px] w-[10px]" fill="#fff" stroke="#777"><path d="M4 1H6V4H9V6H6V9H4V6H1V4H4Z" /></svg>
        </button>
      </div>
    </main>
  );
}

function Properties() {
  return (
    <aside className="flex w-[186px] shrink-0 flex-col pb-[3px] pl-2">
      <div className="flex h-[18px] items-center pl-[3px] pt-[2px]">
        Properties: View properties
        <span className="ml-1 h-[3px] flex-1 border-y border-[#d5d9e6]" />
      </div>
      <div className="flex h-[21px] items-end">
        <button type="button" aria-label="Properties" className="z-10 -mb-px flex h-[22px] w-6 items-center justify-center border border-b-0 border-[#c0c4da] bg-[#ebecf0]">
          <svg viewBox="0 0 28 28" className="h-[18px] w-[18px]" fill="none"><ColorWheel cx={14} cy={14} r={8} /></svg>
        </button>
        <div className="flex h-[21px] flex-1 items-center justify-between border-b border-[#c0c4da] pl-1">
          <button type="button" aria-label="Layers"><svg viewBox="2 2 24 24" className="h-4 w-4" fill="none" stroke="#111">{layersShape}</svg></button>
          <button type="button" aria-label="Rendering"><svg viewBox="0 0 16 16" className="h-4 w-4"><circle cx="7" cy="9" r="6" fill="url(#blue)" /><path d="M9 3L13 1L15 3L12 6Z" fill="#ddd" stroke="#333" /></svg></button>
          <button type="button" aria-label="Materials"><svg viewBox="0 0 16 16" className="h-4 w-4"><path d="M2 14L4 9L8 11Z" fill="#e8602c" stroke="#933" /><path d="M5 9L11 2L14 4L9 11Z" fill="#e7cfc4" stroke="#733" /></svg></button>
          <button type="button" aria-label="Libraries"><svg viewBox="0 0 16 16" className="h-4 w-4" stroke="#6b5210"><path d="M1 13V3H6L7 5H12V7" fill="#f0bf4a" /><path d="M1 13L4 7H15L12 13Z" fill="#ffe08a" /></svg></button>
          <button type="button" aria-label="Help"><svg viewBox="0 0 16 16" className="h-4 w-4"><rect x="1" y="1" width="14" height="14" fill="#dfe6fb" stroke="#33468c" /><path d="M1 1H15V4H1Z" fill="#4562bd" /><circle cx="8" cy="9.500" r="4.500" fill="#2e52b8" /><text x="8" y="13" textAnchor="middle" fontSize="9" fill="#fff">?</text></svg></button>
          <button type="button" aria-label="Panel options" className="text-[#cfcfd4]"><GearIcon className="h-[15px] w-[15px]" /></button>
        </div>
      </div>
      <div className="flex-1 border border-t-0 border-[#c0c4da] pb-4 pl-[8px] pr-[6px] pt-[5px]">
        <div className="mb-2 flex h-7 gap-1">
          <button type="button" aria-label="Camera" className="-ml-[2px] flex h-7 w-7 items-center justify-center bg-[#adb9e8]">
            <svg viewBox="0 0 24 24" className="h-6 w-6"><path d="M2 8H7L9 5H17L19 8H22V20H2Z" fill="#26282c" /><circle cx="14" cy="13.500" r="5" fill="#111" stroke="#bbb" /><circle cx="14" cy="13.500" r="2.500" fill="#445" stroke="#999" strokeWidth=".6" /><path d="M3 10H6" stroke="#999" /></svg>
          </button>
          <button type="button" aria-label="Material" className="h-7 w-7">
            <svg viewBox="0 0 28 28" className="h-7 w-7" fill="url(#blue)"><circle cx="10" cy="18" r="6" /><circle cx="17" cy="12" r="4.500" /><circle cx="22" cy="7" r="3" /></svg>
          </button>
          <button type="button" aria-label="View frame" className="h-7 w-7">
            <svg viewBox="0 0 28 28" className="h-7 w-7"><rect x="3" y="4" width="22" height="20" fill="#91a3b4" stroke="#33404e" strokeWidth="1.600" /><rect x="7" y="8" width="14" height="12" fill="#fff" stroke="#b02b50" /></svg>
          </button>
        </div>
        <Section title="Viewport">
          <TextRow id="title" label="Title" value="Perspective" />
          <TextRow id="width" label="Width" value="1657" dim />
          <TextRow id="height" label="Height" value="721" dim />
          <Row id="projection" label="Projection">
            <div className="relative flex h-full w-full items-center">
              <select id="projection" className="h-5 w-full appearance-none bg-transparent pl-[3px] outline-none">
                <option>Perspecti...</option>
              </select>
              <span className="pointer-events-none absolute right-px top-0 flex h-[19px] w-[19px] items-center justify-center border border-[#a9a9ac] bg-[#e1e1e1]"><ChevronDown className="h-3 w-3" /></span>
            </div>
          </Row>
          <Row id="locked" label="Locked" plain><span className="ml-px"><Check id="locked" /></span></Row>
        </Section>
        <Section title="Camera">
          <TextRow id="lens" label="Lens Len..." value="50.0" />
          <TextRow id="rotation" label="Rotation" value="0.0" />
          <TextRow id="xloc" label="X Location" value="186.776" />
          <TextRow id="yloc" label="Y Location" value="122.419" />
          <TextRow id="zloc" label="Z Location" value="-26.556" />
          <TextRow id="distance" label="Distance ..." value="191.411" plain />
          <PlaceRow id="camera-place" />
        </Section>
        <Section title="Target">
          <TextRow id="xtar" label="X Target" value="34.715" />
          <TextRow id="ytar" label="Y Target" value="25.921" />
          <TextRow id="ztar" label="Z Target" value="38.282" />
          <PlaceRow id="target-place" />
        </Section>
        <Section title="Wallpaper">
          <Row id="filename" label="Filename">
            <input id="filename" defaultValue="(none)" className="w-full min-w-0 bg-transparent pl-[2px] outline-none" />
            <button type="button" aria-label="Browse" className="mr-px h-[19px] w-[19px] shrink-0 border border-[#a9a9ac] bg-[#e1e1e1] leading-3 text-black">...</button>
          </Row>
          <Row id="show" label="Show" plain><span className="ml-px"><Check id="show" checked /></span></Row>
          <Row id="gray-wall" label="Gray" plain><span className="ml-px"><Check id="gray-wall" checked /></span></Row>
        </Section>
      </div>
    </aside>
  );
}

function OsnapBar() {
  return (
    <div className="h-[46px] pl-[4px] pt-[6px]">
      <div className="flex h-[36px] items-start border-l border-[#d3d5de] pl-[4px] pt-1">
        {osnaps.map((o) => (
          <div key={o.label} className={`flex h-[15px] items-center gap-[3px] ${o.width}`}>
            <Check id={o.label} checked />
            <label htmlFor={o.label}>{o.label}</label>
          </div>
        ))}
        <div className="flex h-[15px] w-[68px] items-center gap-[3px]">
          <Check id="project" muted />
          <label htmlFor="project">Project</label>
        </div>
        <div className="flex h-[15px] items-center gap-[3px]">
          <Check id="disable" muted />
          <label htmlFor="disable">Disable</label>
        </div>
      </div>
    </div>
  );
}

function StatusBar() {
  return (
    <div className="flex h-5 divide-x divide-[#c3c7da] border-t border-[#b9bdd2] text-center leading-[19px] whitespace-nowrap">
      <button type="button" className="w-[50px]">CPlane</button>
      <span className="w-[88px]">x 135.944</span>
      <span className="w-[88px]">y 102.463</span>
      <span className="w-[88px]">z</span>
      <span className="w-[88px]">Millimeters</span>
      <button type="button" className="flex w-[168px] items-center gap-[2px] pl-[3px]"><span className="h-[14px] w-[14px] bg-black" />Layer 01</button>
      {toggles.map((t) => (
        <button key={t.label} type="button" className={t.on ? `bg-[#d5dbf0] font-bold ${t.width}` : t.width}>{t.label}</button>
      ))}
      <span className="flex-1 pl-px text-left">Minutes from last save: 2</span>
      <span className="w-[7px]" />
    </div>
  );
}

function Zebra() {
  return (
    <svg viewBox="0 0 76 38" className="h-[38px] w-[76px]">
      <path d="M0 38Q8 33 22 34Q50 27 76 38Z" fill="#b98a4a" />
      <path d="M54 12Q60 15 60 28" stroke="#8e7cc0" strokeWidth="3" fill="none" />
      <path d="M5 13L9 5L12 1L16 2Q22 6 26 12Q40 13 51 10Q57 13 56 22L57 36H53L50 25Q42 28 32 25L31 36H27L25 24Q18 19 18 12L9 15Z" fill="#ece6f3" />
      <path d="M14 3L12 9M18 5L16 11M22 8L19 15M26 12L22 20M30 13L28 23M34 13L33 24M39 13L39 25M44 12L45 25M49 11L51 22M26 28H31M27 32H31M51 28H56M53 32H57" stroke="#77669f" strokeWidth="1.200" fill="none" />
    </svg>
  );
}

function Taskbar() {
  return (
    <footer className="flex h-10 bg-[#211d30] text-white">
      <button type="button" aria-label="Start" className="flex w-12 items-center justify-center">
        <svg viewBox="0 0 16 16" className="h-4 w-4" fill="#fff"><path d="M0 2.300L7 1.300V7.600H0ZM7.800 1.200L16 0V7.600H7.800ZM0 8.400H7V14.700L0 13.700ZM7.800 8.400H16V16L7.800 14.800Z" /></svg>
      </button>
      <div className="flex w-[288px] items-center border border-[#55555c] border-r-0 bg-[#323234] pl-[11px]">
        <Search className="h-[18px] w-[18px] -scale-x-100 text-[#e5e5e5]" strokeWidth={1.5} />
        <input aria-label="Search" placeholder="Type here to search" className="ml-[10px] w-[160px] text-[14px] outline-none placeholder:text-[#d6d6d6]" />
        <span className="ml-auto"><Zebra /></span>
      </div>
      <button type="button" aria-label="Task view" className="flex w-12 items-center justify-center">
        <svg viewBox="0 0 18 18" className="h-[18px] w-[18px]" fill="none" stroke="#fff" strokeWidth="1.200"><path d="M2 1V4H11V1M2 17V14H11V17M2 6H11V12H2ZM15 1V17" /><path d="M14 6H17V9H14Z" fill="#fff" stroke="none" /></svg>
      </button>
      <button type="button" aria-label="Opera" className="mx-[6px] flex w-10 items-center justify-center border-b-[3px] border-[#9db9e0] pt-[3px]">
        <svg viewBox="0 0 24 24" className="h-6 w-6"><ellipse cx="12" cy="12" rx="11" ry="11.500" fill="#e3202f" /><ellipse cx="12" cy="12" rx="5" ry="8.500" fill="#211d30" /><path d="M16 2Q24 6 23 13Q22 20 15 23Q19 18 19 12T16 2Z" fill="#a70f1c" /></svg>
      </button>
      <button type="button" aria-label="File Explorer" className="mx-1 flex w-10 items-center justify-center border-b-[3px] border-[#9db9e0] pt-[3px]">
        <svg viewBox="0 0 24 24" className="h-6 w-6"><path d="M1 3H9L11 5H23V21H1Z" fill="#f3b92f" /><path d="M1 7H23V21H1Z" fill="#fddb72" /><path d="M5 21V14Q5 12 7 12H17Q19 12 19 14V21H15V17H9V21Z" fill="#3c98dc" /></svg>
      </button>
      <button type="button" aria-label="Edge" className="flex w-[50px] items-center justify-center">
        <svg viewBox="0 0 24 24" className="h-6 w-6"><circle cx="12" cy="12" r="11.500" fill="#1a7fd0" /><path d="M1 10Q4 0 13 .5Q23 2 23.500 11Q23 16 17 16Q13 15 15 12Q15 7 10 7Q5 7 1 10Z" fill="#4fd07d" /><path d="M1 10Q4 1 13 .5Q8 4 10 7Q5 7 1 10Z" fill="#35b9d8" /><path d="M8 11Q6 20 16 23Q21 21 22 18Q14 20 12 15Q11 12 13 10Q10 8 8 11Z" fill="#0d4d96" /></svg>
      </button>
      <button type="button" aria-label="Rhinoceros" className="flex w-12 items-center justify-center border-b-[3px] border-[#a9c6ec] bg-[#514e60] pt-[3px]">
        <RhinoLogo className="h-6 w-6" seven />
      </button>

      <div className="ml-auto flex items-center">
        <svg viewBox="0 0 26 26" className="h-[26px] w-[26px]"><path d="M1 4H7V22H1Z" fill="#2b83d0" /><path d="M1 7H4M1 11H4M1 15H4M1 19H4" stroke="#123c6d" /><path d="M17 1Q25 12 25 18A8 8 0 0 1 9 18Q9 12 17 1Z" fill="#3cb2f0" /></svg>
        <span className="ml-[7px] w-[72px] text-[14px]">Lembab</span>
        <ChevronUp className="h-[18px] w-[18px]" strokeWidth={1.5} />
        <svg viewBox="0 0 18 18" className="ml-2 h-[18px] w-[18px]" fill="none" stroke="#fff" strokeWidth="1.200"><path d="M9 15Q9 10 15 10M6 15Q6 7 15 7" /><path d="M3 15Q3 4 15 4" stroke="#8a8794" /><circle cx="13.500" cy="14" r="1.500" fill="#fff" stroke="none" /></svg>
        <svg viewBox="0 0 18 18" className="ml-1 h-[18px] w-[18px]" fill="none" stroke="#fff" strokeWidth="1.300"><path d="M2 4L16 2V15L2 14Z" /><path d="M6 8Q9 4 12 7M12 10Q9 13 6 11" /><circle cx="13" cy="13.500" r="4" fill="#f0a630" stroke="none" /></svg>
        <svg viewBox="0 0 18 18" className="ml-1.5 h-[18px] w-[18px]" fill="none" stroke="#fff" strokeWidth="1.200"><path d="M7 5H15V13H6M15 7H17V11H15M1 4V6Q1 8 3 8T5 6V4M2 2V4M4 2V4M3 8V12H6" /><path d="M9 7H13V11H8Z" fill="#fff" stroke="none" /></svg>
        <svg viewBox="0 0 18 18" className="ml-1 h-[18px] w-[18px]" fill="none" stroke="#fff" strokeWidth="1.200"><path d="M2 7H4L8 3V15L4 11H2ZM11 7L16 12M16 7L11 12" /></svg>
        <div className="ml-1 w-[72px] text-center text-[11px] leading-[18px]">
          <div>8:14</div>
          <div>24/07/2023</div>
        </div>
        <button type="button" aria-label="Notifications" className="relative ml-1.5 h-8 w-[32px]">
          <svg viewBox="0 0 18 18" className="ml-[2px] h-[18px] w-[18px]"><path d="M1 2H17V14H6L3 17V14H1Z" fill="#fff" /><path d="M4 5H14M4 8H14M4 11H10" stroke="#211d30" /></svg>
          <span className="absolute bottom-0 right-0 rounded-full border border-[#888] bg-[#2c2a38] px-[3px] text-[11px] font-bold leading-[14px]">22</span>
        </button>
        <span className="ml-2 mr-1 h-10 border-l border-[#6c6a78]" />
      </div>
    </footer>
  );
}

export default function App() {
  return (
    <div className="relative flex min-h-screen flex-col bg-[#ebecf0] font-['Open_Sans','Noto_Sans',sans-serif] text-[11px] text-[#2a2a2e]">
      <Gradients />
      <TitleBar />
      <CommandArea />
      <Toolbars />
      <div className="flex flex-1">
        <SideToolbar />
        <Viewport />
        <Properties />
      </div>
      <OsnapBar />
      <StatusBar />
      <Taskbar />
    </div>
  );
}
